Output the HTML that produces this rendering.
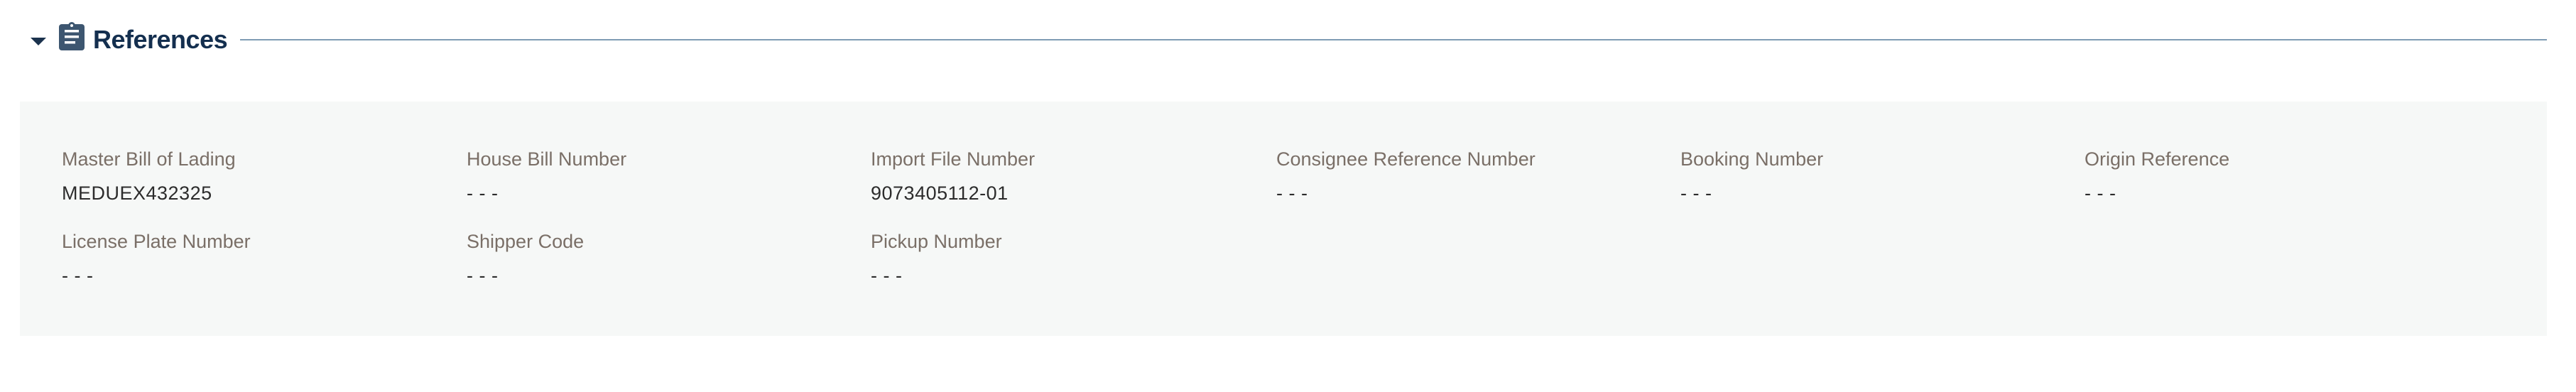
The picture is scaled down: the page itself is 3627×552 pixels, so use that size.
<!DOCTYPE html>
<html><head><meta charset="utf-8"><style>
body{margin:0;width:3627px;height:552px;background:#fff;font-family:"Liberation Sans",sans-serif;position:relative;overflow:hidden}
.a{position:absolute}
.lab{position:absolute;font-size:27px;color:#7a6f67;line-height:1;white-space:nowrap}
.val{position:absolute;font-size:27px;color:#2c2c2c;line-height:1;white-space:nowrap;letter-spacing:0.5px}
</style></head><body>
<svg class="a" style="left:40px;top:50px" width="30" height="16"><polygon points="3,3 25,3 14,14" fill="#1b324d"/></svg>
<svg class="a" style="left:82px;top:29px" width="40" height="44" viewBox="0 0 40 44">
<rect x="1" y="5" width="36" height="37" rx="4" fill="#3d5670"/>
<circle cx="19" cy="7" r="5" fill="#3d5670"/><circle cx="19" cy="7" r="2" fill="#fff"/>
<rect x="9" y="13" width="20" height="3.5" fill="#fff"/>
<rect x="9" y="21" width="20" height="3.5" fill="#fff"/>
<rect x="9" y="29" width="15" height="3.5" fill="#fff"/>
</svg>
<div class="a" style="left:131px;top:35px;font-size:36px;font-weight:bold;color:#142f4f;letter-spacing:-0.5px">References</div>
<div class="a" style="left:338px;top:55px;width:3248px;height:2px;background:#7f9cb4"></div>
<div class="a" style="left:28px;top:143px;width:3558px;height:330px;background:#f6f8f7"></div>

<div class="lab" style="left:87px;top:211px">Master Bill of Lading</div>
<div class="val" style="left:87px;top:259px">MEDUEX432325</div>
<div class="lab" style="left:657px;top:211px">House Bill Number</div>
<div class="val" style="left:657px;top:259px">- - -</div>
<div class="lab" style="left:1226px;top:211px">Import File Number</div>
<div class="val" style="left:1226px;top:259px">9073405112-01</div>
<div class="lab" style="left:1797px;top:211px">Consignee Reference Number</div>
<div class="val" style="left:1797px;top:259px">- - -</div>
<div class="lab" style="left:2366px;top:211px">Booking Number</div>
<div class="val" style="left:2366px;top:259px">- - -</div>
<div class="lab" style="left:2935px;top:211px">Origin Reference</div>
<div class="val" style="left:2935px;top:259px">- - -</div>

<div class="lab" style="left:87px;top:327px">License Plate Number</div>
<div class="val" style="left:87px;top:375px">- - -</div>
<div class="lab" style="left:657px;top:327px">Shipper Code</div>
<div class="val" style="left:657px;top:375px">- - -</div>
<div class="lab" style="left:1226px;top:327px">Pickup Number</div>
<div class="val" style="left:1226px;top:375px">- - -</div>
</body></html>
